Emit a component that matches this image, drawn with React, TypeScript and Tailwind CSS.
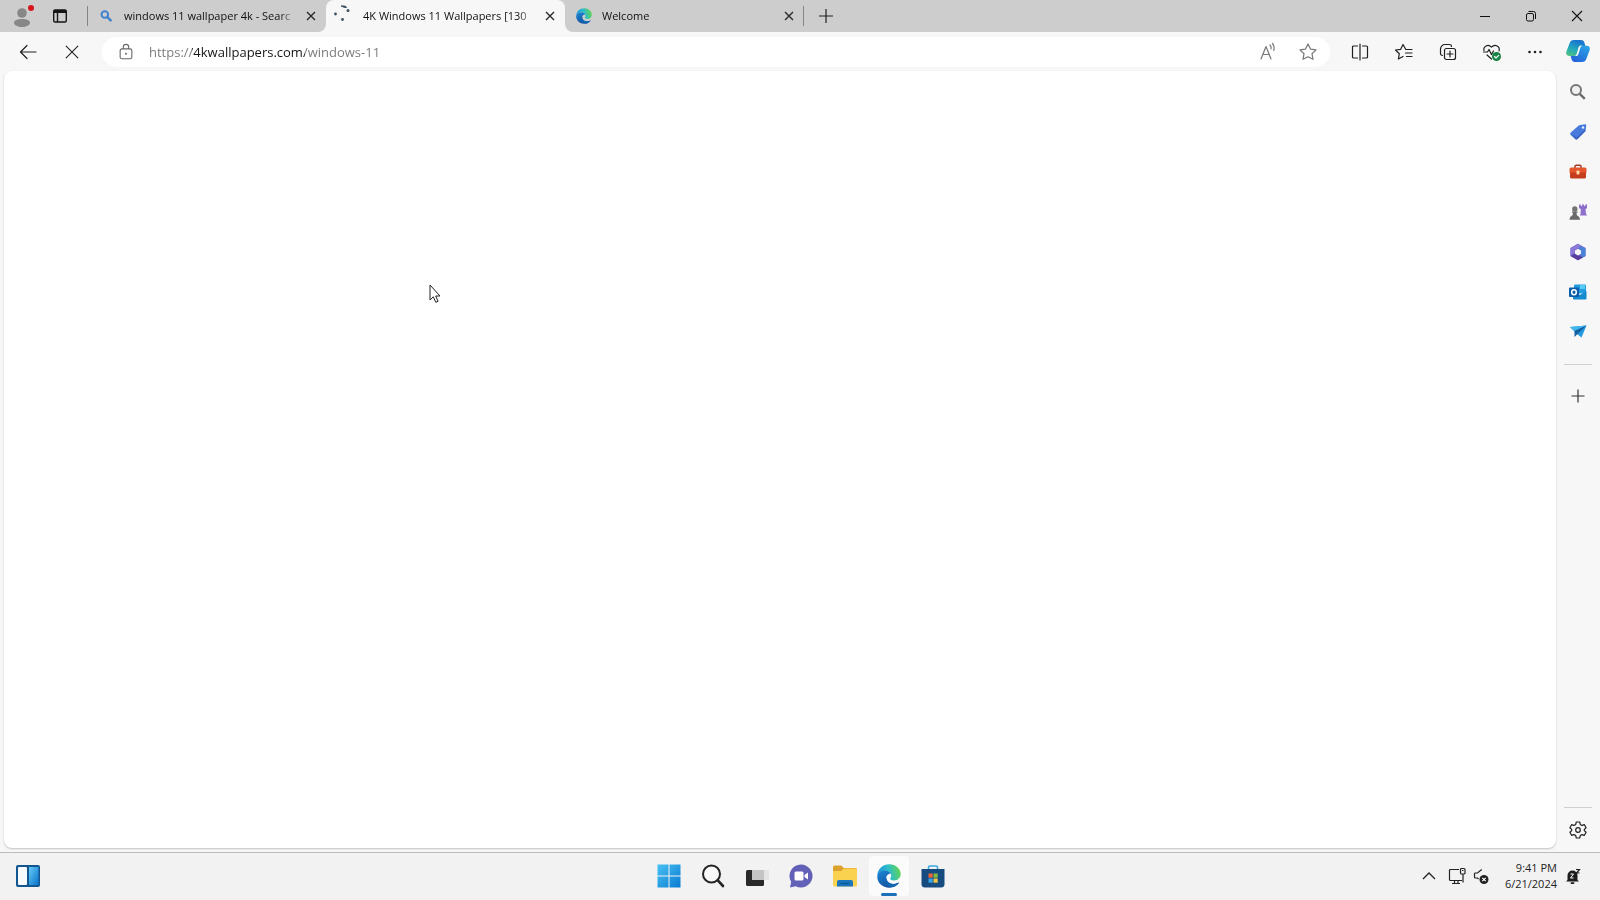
import type { ReactNode } from 'react';

function IconButton({ label, className = '', children }: { label: string; className?: string; children: ReactNode }) {
  return (
    <button type="button" aria-label={label} className={`flex shrink-0 items-center justify-center ${className}`}>
      {children}
    </button>
  );
}

function Line({ size = 20, className = 'text-[#202020]', children }: { size?: number; className?: string; children: ReactNode }) {
  return (
    <svg width={size} height={size} viewBox="0 0 20 20" fill="none" stroke="currentColor" strokeWidth="1.2" strokeLinecap="round" strokeLinejoin="round" className={className} aria-hidden="true">
      {children}
    </svg>
  );
}

function EdgeLogo({ size, id }: { size: number; id: string }) {
  return (
    <svg width={size} height={size} viewBox="0 0 24 24" aria-hidden="true">
      <defs>
        <linearGradient id={`${id}-top`} x1="0" y1="0.6" x2="1" y2="0.4">
          <stop offset="0" stopColor="#1a8fd8" />
          <stop offset="0.5" stopColor="#2dbccb" />
          <stop offset="1" stopColor="#62d64f" />
        </linearGradient>
        <linearGradient id={`${id}-low`} x1="0" y1="0" x2="0.6" y2="1">
          <stop offset="0" stopColor="#1b86d6" />
          <stop offset="1" stopColor="#134f9c" />
        </linearGradient>
      </defs>
      <path d="M0.3 11.5C0.8 5 5.8 0.3 12.2 0.3c6.7 0 11.5 4.7 11.5 9.7 0 3.8-3 6.4-6.4 6.4-3.3 0-4.4-1.3-4.1-2 .2-.5 1-1 1-2.6 0-2.8-2.7-5-6.1-5C4.7 6.8 1.7 8.5.3 11.5z" fill={`url(#${id}-top)`} />
      <path d="M.3 12C1 8.6 4.3 6.6 8.1 6.6c2.7 0 5 1.3 5.8 3.3-1.3-.7-4.7.6-4.7 4.6 0 3.3 3.2 5.7 6.9 5.7 2.3 0 4.3-.8 5.6-1.6.3-.1.5.2.3.5A11.7 11.7 0 0 1 12.2 23.7C5.3 23.7-.2 18.6.3 12z" fill={`url(#${id}-low)`} />
      <path d="M9.3 13.5c-1.6 3.6.6 8.4 5 9.8 3-.5 5.8-1.9 7.5-4.5-5.5 2.6-11.9.8-12.5-5.3z" fill="#1267b4" />
    </svg>
  );
}

function SearchFavicon() {
  return (
    <svg width="16" height="16" viewBox="0 0 16 16" fill="none" stroke="#3f83cf" aria-hidden="true">
      <circle cx="6.8" cy="6.5" r="3.3" strokeWidth="2" />
      <path d="M9.4 9.2l4 4" strokeWidth="2.4" />
    </svg>
  );
}

function Spinner() {
  return (
    <svg width="16" height="16" viewBox="0 0 16 16" fill="#3b5263" className="overflow-visible" aria-hidden="true">
      <circle cx="-1.5" cy="6" r="1.4" />
      <circle cx="5.5" cy="11.5" r="1.4" />
      <circle cx="11" cy="2.4" r="1.5" />
      <path d="M4-2.8l4.500.5 1.800 2-2.600.3-3.700-1.500z" />
    </svg>
  );
}

function CloseGlyph() {
  return (
    <svg width="10" height="10" viewBox="0 0 10 10" stroke="#2a2a2a" strokeWidth="1.4" aria-hidden="true">
      <path d="M1 1l8 8M9 1l-8 8" />
    </svg>
  );
}

function Tab({ title, icon, active = false, className = '' }: { title: string; icon: ReactNode; active?: boolean; className?: string }) {
  return (
    <div className={`relative flex h-8 w-[239px] items-center pl-[11px] pr-[5px] ${active ? 'rounded-t-lg bg-[#f7f7f7]' : ''} ${className}`}>
      {active && (
        <>
          <svg className="absolute bottom-0 right-full" width="8" height="8" viewBox="0 0 8 8" fill="#f7f7f7" aria-hidden="true"><path d="M8 0v8H0a8 8 0 0 0 8-8z" /></svg>
          <svg className="absolute bottom-0 left-full" width="8" height="8" viewBox="0 0 8 8" fill="#f7f7f7" aria-hidden="true"><path d="M0 0v8h8a8 8 0 0 1-8-8z" /></svg>
        </>
      )}
      <span className="mr-[10px] shrink-0">{icon}</span>
      <button type="button" role="tab" aria-selected={active} className="min-w-0 flex-1 overflow-hidden whitespace-nowrap text-left text-[11px] leading-4 text-[#111] mask-r-from-90% mask-r-to-100%">
        {title}
      </button>
      <IconButton label={`Close ${title}`} className="ml-1 size-5"><CloseGlyph /></IconButton>
    </div>
  );
}

function TabStrip() {
  return (
    <header className="flex h-8 bg-[#cdcdcd]">
      <IconButton label="Profile" className="w-11">
        <svg width="24" height="24" viewBox="0 0 24 24" fill="#878787" aria-hidden="true">
          <circle cx="12" cy="9" r="4.8" />
          <path d="M4 19c0-3 3.500-4 8-4s8 1 8 4c0 2-4 4-8 4s-8-2-8-4z" />
          <circle cx="21" cy="4" r="3" fill="#d8141c" />
        </svg>
      </IconButton>
      <IconButton label="Tab actions" className="mr-[11px] w-8">
        <svg width="16" height="16" viewBox="0 0 16 16" fill="none" stroke="#151515" aria-hidden="true">
          <rect x="1.7" y="2" width="12.6" height="12" rx="1.5" strokeWidth="1.4" />
          <path d="M1.500 3.500h13" strokeWidth="3" />
          <path d="M5.500 4v10" strokeWidth="1.4" />
        </svg>
      </IconButton>
      <div role="tablist" className="flex">
        <Tab title="windows 11 wallpaper 4k - Searc" icon={<SearchFavicon />} className="before:absolute before:left-0 before:h-5 before:w-px before:bg-[#858585]" />
        <Tab title="4K Windows 11 Wallpapers [130" icon={<Spinner />} active />
        <Tab title="Welcome" icon={<EdgeLogo size={16} id="tab-edge" />} className="after:absolute after:right-0 after:h-5 after:w-px after:bg-[#858585]" />
      </div>
      <IconButton label="New tab" className="w-11">
        <svg width="14" height="14" viewBox="0 0 14 14" stroke="#202020" strokeWidth="1.2" aria-hidden="true"><path d="M7 0v14M0 7h14" /></svg>
      </IconButton>
      <div className="ml-auto flex">
        <IconButton label="Minimize" className="w-[46px]">
          <svg width="10" height="10" viewBox="0 0 10 10" stroke="#111" aria-hidden="true"><path d="M0 5.500h10" /></svg>
        </IconButton>
        <IconButton label="Restore" className="w-[46px]">
          <svg width="12" height="12" viewBox="0 0 12 12" fill="none" stroke="#111" aria-hidden="true">
            <rect x="1.5" y="3.5" width="7" height="7.5" rx="1.5" />
            <path d="M3.500 1.500h5a2 2 0 0 1 2 2v5.500" />
          </svg>
        </IconButton>
        <IconButton label="Close" className="w-[46px]">
          <svg width="12" height="12" viewBox="0 0 12 12" stroke="#111" strokeWidth="1.1" aria-hidden="true"><path d="M1 1l10 10M11 1L1 11" /></svg>
        </IconButton>
      </div>
    </header>
  );
}

function Toolbar() {
  return (
    <div className="flex h-[39px] items-center">
      <IconButton label="Back" className="ml-[6px] w-11"><Line><path d="M18 10H2.500M9 3.500L2.500 10 9 16.500" /></Line></IconButton>
      <IconButton label="Stop" className="w-11"><Line size={18}><path d="M3.500 3.500l13 13M16.500 3.500l-13 13" /></Line></IconButton>
      <div className="ml-2 flex h-[30px] flex-1 items-center rounded-full bg-white pl-3 pr-[2px]">
        <IconButton label="View site information" className="w-6">
          <Line size={18} className="text-[#666]">
            <rect x="3.5" y="6.5" width="13" height="11" rx="2" />
            <path d="M7 6V4.500a3 3 0 0 1 6 0V6" />
            <circle cx="10" cy="12" r=".5" />
          </Line>
        </IconButton>
        <input
          type="text"
          aria-label="Address bar"
          defaultValue="https://4kwallpapers.com/windows-11"
          className="ml-[11px] min-w-0 flex-1 bg-[linear-gradient(90deg,#777_43px,#151515_43px,#151515_156px,#777_156px)] bg-clip-text text-[13px] leading-5 text-transparent outline-none"
        />
        <IconButton label="Read aloud" className="w-10">
          <Line className="text-[#777]"><path d="M3 17L8 4.500 13 17M5 12.500h6M12 3c1 1 1.300 2.300 1 4M14.500 1.500c1.700 2 2 4.500 1.200 7" /></Line>
        </IconButton>
        <IconButton label="Add to favorites" className="w-10">
          <Line className="text-[#777]"><path d="M10 2l2.500 5.100 5.500.8-4 3.900 1 5.500-5-2.600-5 2.600 1-5.500-4-3.900 5.500-.8z" /></Line>
        </IconButton>
      </div>
      <IconButton label="Split screen" className="ml-2 w-11">
        <Line><path d="M10 2v16M7.500 4H3.500a1 1 0 0 0-1 1v10a1 1 0 0 0 1 1h4M12.500 4h4a1 1 0 0 1 1 1v10a1 1 0 0 1-1 1h-4" /></Line>
      </IconButton>
      <IconButton label="Favorites" className="w-11">
        <Line><path d="M13 7.500h-1.200L9 2.500 6.700 7.300 1.500 8l3.800 3.700L4.400 17 9 14.500M12 7.500h6M11.500 11H18M12.500 14.500H18" /></Line>
      </IconButton>
      <IconButton label="Collections" className="w-11">
        <Line><path d="M4.500 13.500A2 2 0 0 1 2.500 11.500V7a4.500 4.500 0 0 1 4.500-4.500h4.500A2 2 0 0 1 13.500 4.500" /><rect x="6.5" y="6.5" width="11" height="11" rx="2" /><path d="M12 9v6M9 12h6" /></Line>
      </IconButton>
      <IconButton label="Browser essentials" className="w-11">
        <Line>
          <path d="M2 8.500c-1-4 4-7 7.500-3.300C13 1.500 18.500 4.500 17 9M1.500 10h4l1.500-2.500 2.500 5L11.500 9M5 13l4.500 4" />
          <circle cx="14.5" cy="14.5" r="4.5" fill="#168443" stroke="none" />
          <path d="M12.500 14.500l1.500 1.500 2.700-2.700" stroke="#fff" />
        </Line>
      </IconButton>
      <IconButton label="Settings and more" className="w-[42px]">
        <Line><g fill="currentColor" stroke="none"><circle cx="4.5" cy="10" r="1.3" /><circle cx="10" cy="10" r="1.3" /><circle cx="15.5" cy="10" r="1.3" /></g></Line>
      </IconButton>
    </div>
  );
}

function Copilot() {
  return (
    <svg width="24" height="24" viewBox="0 0 24 24" aria-hidden="true">
      <defs>
        <linearGradient id="cp-a" x1=".4" y1="0" x2="0" y2="1"><stop offset="0" stopColor="#1976cf" /><stop offset=".5" stopColor="#23a9ba" /><stop offset="1" stopColor="#58c679" /></linearGradient>
        <linearGradient id="cp-b" x1=".7" y1="0" x2="0" y2="1"><stop offset="0" stopColor="#2b9fe4" /><stop offset="1" stopColor="#235ad9" /></linearGradient>
      </defs>
      <path d="M8 1h7c2 0 3 1 3.500 3l1 3.500-8 9.500H3.500C.5 17-.3 15 .4 12.500L3.500 4.500C4.300 2 5.500 1 8 1z" fill="url(#cp-a)" />
      <path d="M16 23H9c-2 0-3-1-3.500-3l-.8-3H9c2 0 3-.8 3.500-2.500l1.700-5.500c.5-1.600 1.500-2.300 3-2.300h3.300c3 0 3.800 2 3.100 4.500L20.500 19.500C19.700 22 18.500 23 16 23z" fill="url(#cp-b)" />
      <path d="M12.500 8.500c.5-1.400 1.300-2 2.700-2h1.300c-1.200.4-1.800 1.200-2.200 2.500l-1.800 5.800c-.5 1.500-1.300 2.300-2.800 2.300H8.500c1.200-.4 1.800-1.100 2.200-2.300z" fill="#f1fafb" />
    </svg>
  );
}

function SidebarIcon({ label, children }: { label: string; children: ReactNode }) {
  return (
    <IconButton label={label} className="h-10 w-full">
      <svg width="18" height="18" viewBox="0 0 18 18" fill="none" aria-hidden="true">{children}</svg>
    </IconButton>
  );
}

function Sidebar() {
  return (
    <aside aria-label="Sidebar" className="flex w-11 shrink-0 flex-col items-center">
      <IconButton label="Copilot" className="mb-[2px] h-[38px] w-full"><Copilot /></IconButton>
      <SidebarIcon label="Search">
        <circle cx="7" cy="7" r="5" stroke="#777" strokeWidth="2" fill="#f1f1f1" />
        <path d="M10.800 10.800l5 5" stroke="#6c6c6c" strokeWidth="2.4" />
      </SidebarIcon>
      <SidebarIcon label="Shopping">
        <path d="M10 2.200l6-.9c.8 0 1.200.4 1.200 1.200L16.500 8l-8 8c-.8.8-1.700.8-2.500 0L1.800 12c-.8-.8-.8-1.700 0-2.500z" fill="#497bdd" />
        <path d="M1.500 10.500l5.700 6 1.300-.5 8-8-.3-1.500-8.500 8z" fill="#3760bd" />
        <circle cx="14" cy="4.5" r="1.2" fill="#e7effd" />
      </SidebarIcon>
      <SidebarIcon label="Tools">
        <path d="M6 5V3.500C6 2.700 6.500 2.200 7.300 2.200h3.400c.8 0 1.300.5 1.300 1.300V5" stroke="#9d3b28" strokeWidth="1.5" />
        <rect x=".5" y="4.5" width="17" height="6" rx="1.5" fill="#e4562c" />
        <path d="M1 9.500h16V14a1.500 1.500 0 0 1-1.500 1.500h-13A1.500 1.500 0 0 1 1 14z" fill="#c53d1c" />
        <rect x="7.5" y="7.5" width="3" height="4" rx=".7" fill="#ffd5a5" />
      </SidebarIcon>
      <SidebarIcon label="Games">
        <path d="M10 1.500h1.700V3H13V1.500h2V3h1.200V1.500H18V5l-1.500 1.200.5 4.300 1 2h-7l.6-2 .2-4.300L10 5z" fill="#8c70cc" />
        <circle cx="5.8" cy="6" r="2.7" fill="#747474" />
        <path d="M3 8.500h5.600v1.300H7.500c0 2 .5 3 2.500 4l1.200 3H.3l1.100-3c2-1 2.600-2 2.600-4H3z" fill="#6a6a6a" />
      </SidebarIcon>
      <SidebarIcon label="Microsoft 365">
        <path d="M9 .7l7.500 4.300v8L9 17.300 1.500 13V5z" fill="#6a5fc8" />
        <path d="M9 .7L1.500 5v7.500L6 10V7l6-3.500z" fill="#8b78d9" />
        <path d="M12 3.500L16.500 5v8L12 15.500V7L9 5.200z" fill="#4a83d8" />
        <path d="M1.500 13L9 17.300l5-3-5-2-3-1.500z" fill="#5b3f9f" />
        <path d="M9 5.700l3 1.700v3.300l-3 1.700-3-1.700V7.400z" fill="#f7f7f7" />
      </SidebarIcon>
      <SidebarIcon label="Outlook">
        <rect x="5" y="1.5" width="12" height="9" rx="1" fill="#239be0" />
        <path d="M11 2h5v4h-5z" fill="#5acbf4" />
        <path d="M4 8l7 4 6.500-4v7.500a1 1 0 0 1-1 1H5a1 1 0 0 1-1-1z" fill="#1588ce" />
        <rect x="0" y="4.5" width="10" height="9.5" rx="1" fill="#075da9" />
        <ellipse cx="5" cy="9.2" rx="2.3" ry="2.5" stroke="#fff" strokeWidth="1.5" />
      </SidebarIcon>
      <SidebarIcon label="Drop">
        <path d="M1 4l16.500-1.500L12.500 14.500 8 11z" fill="#249ade" />
        <path d="M1 4l16.500-1.500L5.500 8z" fill="#42b5ed" />
        <path d="M5.500 8l12-5.500L8.500 11 5.500 14z" fill="#145e9f" />
      </SidebarIcon>
      <hr className="mt-3 w-7 border-[#cfcfcf]" />
      <IconButton label="Customize" className="mt-[11px] h-10 w-full">
        <svg width="14" height="14" viewBox="0 0 14 14" stroke="#333" strokeWidth="1.2" aria-hidden="true"><path d="M7 .5v13M.5 7h13" /></svg>
      </IconButton>
      <hr className="mt-auto w-7 border-[#cfcfcf]" />
      <IconButton label="Settings" className="h-11 w-full">
        <Line>
          <path d="M8.300 2h3.400l.6 2.400 1.700 1 2.400-.7 1.700 3-1.800 1.700v1.200l1.800 1.700-1.700 3-2.400-.7-1.700 1-.6 2.400H8.300l-.6-2.400-1.700-1-2.400.7-1.700-3 1.800-1.700V9.400L1.900 7.700l1.700-3 2.400.7 1.700-1z" />
          <circle cx="10" cy="10" r="2.3" />
        </Line>
      </IconButton>
    </aside>
  );
}

function TaskButton({ label, active = false, children }: { label: string; active?: boolean; children: ReactNode }) {
  return (
    <IconButton label={label} className={`relative size-10 rounded ${active ? 'bg-[#fbfbfb] after:absolute after:bottom-0 after:h-[3px] after:w-4 after:rounded-full after:bg-[#1b70b8]' : ''}`}>
      {children}
    </IconButton>
  );
}

function Taskbar() {
  return (
    <footer className="grid h-12 grid-cols-[1fr_auto_1fr] items-center border-t border-[#bcbcbc] bg-[#f2f2f2] pb-[2px]">
      <IconButton label="Widgets" className="ml-2 size-10">
        <svg width="24" height="24" viewBox="0 0 24 24" aria-hidden="true">
          <defs><linearGradient id="widget" x1="0" y1="0" x2="1" y2="1"><stop offset="0" stopColor="#65c9f7" /><stop offset="1" stopColor="#0874cb" /></linearGradient></defs>
          <rect x="0" y="1" width="24" height="22" rx="2" fill="#12568f" />
          <rect x="2" y="3" width="9" height="18" rx="1" fill="#f7fbff" />
          <rect x="13" y="3" width="9.5" height="18" fill="url(#widget)" />
        </svg>
      </IconButton>
      <nav aria-label="Taskbar" className="flex gap-1 pl-[2px]">
        <TaskButton label="Start">
          <svg width="24" height="24" viewBox="0 0 24 24" aria-hidden="true">
            <defs><linearGradient id="win" gradientUnits="userSpaceOnUse" x1="0" y1="0" x2="24" y2="24"><stop offset="0" stopColor="#49c3f5" /><stop offset="1" stopColor="#0879d0" /></linearGradient></defs>
            <path d="M.5.5h11v11H.5zM12.500.5h11v11h-11zM.5 12.500h11v11H.5zM12.500 12.500h11v11h-11z" fill="url(#win)" />
          </svg>
        </TaskButton>
        <TaskButton label="Search">
          <svg width="24" height="24" viewBox="0 0 24 24" fill="none" stroke="#242424" strokeLinecap="round" aria-hidden="true">
            <circle cx="10.5" cy="10" r="8.5" strokeWidth="2" fill="#f8f8f8" /><path d="M16.800 16.300l5.200 5.700" strokeWidth="2.6" />
          </svg>
        </TaskButton>
        <TaskButton label="Task view">
          <svg width="24" height="24" viewBox="0 0 24 24" aria-hidden="true">
            <rect x="1" y="6" width="18" height="16" rx="1.5" fill="#292929" />
            <rect x="7" y="6" width="17" height="10" rx="1" fill="#e4e4e4" />
            <path d="M7 6h12v10H7z" fill="#c4c4c4" />
          </svg>
        </TaskButton>
        <TaskButton label="Chat">
          <svg width="26" height="26" viewBox="0 0 26 26" aria-hidden="true">
            <path d="M13 1.500a11.500 11.500 0 1 1-5.300 21.700L2 24.500l1.200-5.600A11.500 11.500 0 0 1 13 1.500z" fill="#6360b8" />
            <rect x="6.5" y="8.500" width="9" height="9" rx="1.5" fill="#fff" />
            <path d="M16.500 12l3.500-2.500v7L16.500 14z" fill="#fff" />
          </svg>
        </TaskButton>
        <TaskButton label="File Explorer">
          <svg width="26" height="24" viewBox="0 0 26 24" aria-hidden="true">
            <path d="M1 3a1.500 1.500 0 0 1 1.500-1.500H9L12 4h11.500A1.500 1.500 0 0 1 25 5.500V10H1z" fill="#dca12c" />
            <path d="M1 7h8l3-2.500h11.500A1.500 1.500 0 0 1 25 6v15a1.500 1.500 0 0 1-1.500 1.500h-21A1.500 1.500 0 0 1 1 21z" fill="#fbd150" />
            <path d="M5 22.500V18a2 2 0 0 1 2-2h12a2 2 0 0 1 2 2v4.500z" fill="#1b76bd" />
            <path d="M8.500 19.500h9" stroke="#0b5a99" strokeWidth="1.5" />
          </svg>
        </TaskButton>
        <TaskButton label="Microsoft Edge" active><EdgeLogo size={24} id="task-edge" /></TaskButton>
        <TaskButton label="Microsoft Store">
          <svg width="24" height="24" viewBox="0 0 24 24" aria-hidden="true">
            <path d="M7.500 6V3.500A1.500 1.500 0 0 1 9 2h6a1.500 1.500 0 0 1 1.500 1.500V6" fill="none" stroke="#39a9df" strokeWidth="1.6" />
            <path d="M.5 5h23v15a3.500 3.500 0 0 1-3.500 3.500H4A3.500 3.500 0 0 1 .5 20z" fill="#164b80" />
            <path d="M7.500 9.500h4.200v4.200H7.500z" fill="#ed6438" /><path d="M12.500 9.500h4.200v4.200h-4.200z" fill="#83bd3d" />
            <path d="M7.500 14.500h4.200v4.200H7.500z" fill="#38a6e7" /><path d="M12.500 14.500h4.200v4.200h-4.200z" fill="#f5c443" />
          </svg>
        </TaskButton>
      </nav>
      <div className="flex items-center justify-end pr-[19px]">
        <IconButton label="Show hidden icons" className="mr-1 w-6">
          <svg width="14" height="8" viewBox="0 0 14 8" fill="none" stroke="#222" strokeWidth="1.3" aria-hidden="true"><path d="M1 7l6-6 6 6" /></svg>
        </IconButton>
        <IconButton label="Network" className="w-6">
          <svg width="18" height="18" viewBox="0 0 18 18" fill="none" stroke="#222" strokeWidth="1.2" aria-hidden="true">
            <path d="M11 2.500H2.500a1 1 0 0 0-1 1v9a1 1 0 0 0 1 1H14M4 16.500h8M6.500 13.500v3M10 13.500v3M15 7v8.500" />
            <rect x="12.5" y="1.5" width="4.5" height="5.5" rx="1" /><path d="M14 3.500h1.500" />
          </svg>
        </IconButton>
        <IconButton label="Volume" className="w-6">
          <svg width="18" height="18" viewBox="0 0 18 18" fill="none" stroke="#222" strokeWidth="1.2" aria-hidden="true">
            <path d="M9 4V3L5.500 6H3.500a1 1 0 0 0-1 1v3a1 1 0 0 0 1 1h2l1 1" />
            <circle cx="12" cy="12.5" r="4.5" fill="#222" stroke="none" />
            <path d="M10.300 10.800l3.400 3.400M13.700 10.800l-3.400 3.400" stroke="#fff" />
          </svg>
        </IconButton>
        <time dateTime="2024-06-21T21:41" className="ml-3 flex flex-col text-right text-[11px] leading-4 text-[#222]">
          <span>9:41 PM</span>
          <span>6/21/2024</span>
        </time>
        <IconButton label="Notifications" className="ml-2 w-4">
          <svg width="16" height="16" viewBox="0 0 16 16" aria-hidden="true">
            <path d="M2.500 12V7.500A5 5 0 0 1 7.500 2.500a5 5 0 0 1 5 5V12l1.500 1.500H1zM5.500 14.200h4a2 2 0 0 1-4 0z" fill="#1d1d1d" />
            <path d="M5.500 6h3l-3 4h3" fill="none" stroke="#fff" />
            <path d="M11 1.500h3.500l-3 3.500h3" fill="none" stroke="#1d1d1d" strokeWidth="1.2" />
          </svg>
        </IconButton>
      </div>
    </footer>
  );
}

export default function App() {
  return (
    <div className="relative flex min-h-screen flex-col bg-[#f7f7f7] font-['Open_Sans','Noto_Sans',sans-serif] text-[#1b1b1b]">
      <TabStrip />
      <div className="flex flex-1">
        <div className="flex min-w-0 flex-1 flex-col">
          <Toolbar />
          <main aria-label="Page content" className="mb-1 ml-1 flex-1 rounded-lg bg-white shadow-[0_1px_2px_rgba(0,0,0,0.22)]" />
        </div>
        <Sidebar />
      </div>
      <Taskbar />
      <svg className="pointer-events-none absolute left-[429px] top-[284px]" width="13" height="20" viewBox="0 0 13 20" fill="#fff" stroke="#222" aria-hidden="true">
        <path d="M1 1v15l3.300-3.200 2.500 5.500 2.300-1-2.400-5.300H11z" />
      </svg>
    </div>
  );
}
